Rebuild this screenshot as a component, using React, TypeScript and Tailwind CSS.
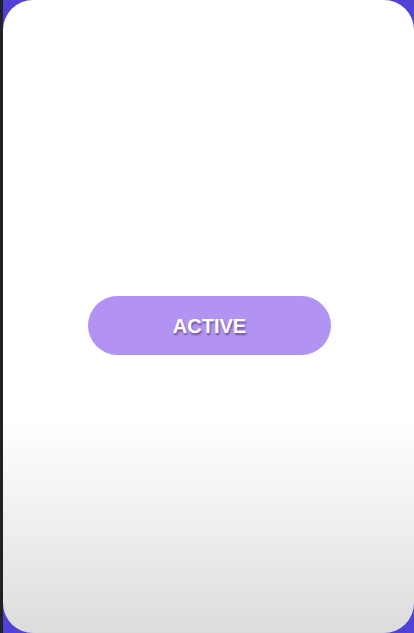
import React from "react";

const App: React.FC = () => {
  return (
    <div className="flex h-[633px] w-[414px] bg-[#5142d6]">
      {/* dark edge on the left */}
      <div className="w-[3px] bg-[#222226]" />

      {/* Card */}
      <div className="flex flex-1 flex-col items-center rounded-[30px] bg-[linear-gradient(to_bottom,#ffffff_0%,#ffffff_66%,#f4f4f4_78%,#dcdcdc_100%)]">
        <div className="h-[296px]" />
        <button className="ml-[2px] flex h-[59px] w-[243px] items-center justify-center rounded-full bg-[#b393f2] text-[20px] font-bold text-white [font-family:'Liberation_Sans',Arial,sans-serif] [text-shadow:1px_2px_2px_rgba(60,30,90,0.55)]">
          ACTIVE
        </button>
      </div>
    </div>
  );
};

export default App;
